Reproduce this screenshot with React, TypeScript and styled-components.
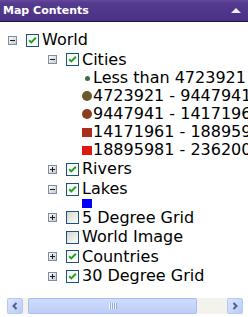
import * as React from 'react';
import styled, { createGlobalStyle } from 'styled-components';

type LegendItem = { label: string; shape: 'dot' | 'circle' | 'square'; color: string; size: number };
type TreeNode = {
    label: string;
    checked: boolean;
    expandable: boolean;
    expanded?: boolean;
    h: number;
    children?: TreeNode[];
    legend?: LegendItem[];
    legendH?: number;
};

const tree: TreeNode = {
    label: 'World', checked: true, expandable: true, expanded: true, h: 20,
    children: [
        {
            label: 'Cities', checked: true, expandable: true, expanded: true, h: 19, legendH: 18,
            legend: [
                { label: 'Less than 4723921', shape: 'dot', color: '#3b6c45', size: 5 },
                { label: '4723921 - 9447941', shape: 'circle', color: '#6a5a2c', size: 10 },
                { label: '9447941 - 14171961', shape: 'circle', color: '#8a3e1e', size: 10 },
                { label: '14171961 - 18895981', shape: 'square', color: '#a92f1d', size: 9 },
                { label: '18895981 - 23620001', shape: 'square', color: '#dc1a10', size: 9 },
            ],
        },
        { label: 'Rivers', checked: true, expandable: true, h: 20 },
        {
            label: 'Lakes', checked: true, expandable: true, expanded: true, h: 20, legendH: 9,
            legend: [{ label: '', shape: 'square', color: '#0000ff', size: 9 }],
        },
        { label: '5 Degree Grid', checked: false, expandable: true, h: 19 },
        { label: 'World Image', checked: false, expandable: false, h: 20 },
        { label: 'Countries', checked: true, expandable: true, h: 19 },
        { label: '30 Degree Grid', checked: true, expandable: true, h: 20 },
    ],
};

const GlobalStyle = createGlobalStyle`
  html, body { margin: 0; padding: 0; background: #fff; }
  body { font-family: "DejaVu Sans", Verdana, sans-serif; }
`;

const Panel = styled.div`
  width: 248px;
  height: 317px;
  display: flex;
  flex-direction: column;
  background: #fff;
  overflow: hidden;
`;

const Header = styled.div`
  height: 21px;
  flex: none;
  display: flex;
  align-items: center;
  justify-content: space-between;
  padding: 0 7px 0 3px;
  background: linear-gradient(#634a9c 0, #543b90 3px, #4a3185 100%);
  border-bottom: 1px solid #1f1340;
`;

const Title = styled.span`
  color: #fff;
  font-weight: bold;
  font-size: 11px;
`;

const CollapseArrow = styled.span`
  width: 0;
  height: 0;
  border-left: 5px solid transparent;
  border-right: 5px solid transparent;
  border-bottom: 5px solid #ececf4;
  margin-top: -1px;
`;

const Content = styled.div`
  flex: 1;
  overflow: hidden;
  padding: 8px 0 0 8px;
  color: #000;
  font-size: 16px;
  white-space: nowrap;
`;

const Row = styled.div<{ $h: number }>`
  display: flex;
  align-items: center;
  height: ${p => p.$h}px;
  line-height: ${p => p.$h}px;
`;

const ExpanderSlot = styled.span`
  width: 9px;
  height: 9px;
  flex: none;
  margin-right: 9px;
  display: block;
`;

const ExpanderBox = styled.svg`
  display: block;
`;

const CheckBox = styled.span<{ $checked: boolean }>`
  width: 13px;
  height: 13px;
  flex: none;
  box-sizing: border-box;
  margin-right: 3px;
  border: 1px solid #1c5180;
  background: ${p => (p.$checked
        ? 'linear-gradient(135deg, #f4f4f0, #fff)'
        : 'linear-gradient(135deg, #d6d5ce 0%, #ebeae4 50%, #fbfbf9 100%)')};
  display: block;
`;

const Label = styled.span`
  display: block;
`;

const Children = styled.div<{ $indent: number }>`
  padding-left: ${p => p.$indent}px;
`;

const SwatchSlot = styled.span`
  width: 10px;
  flex: none;
  display: flex;
  align-items: center;
  justify-content: center;
  margin-right: 1px;
`;

const Swatch = styled.span<{ $size: number; $color: string; $round: boolean }>`
  width: ${p => p.$size + (p.$round ? 0 : 1)}px;
  height: ${p => p.$size}px;
  background: ${p => p.$color};
  border-radius: ${p => (p.$round ? '50%' : '0')};
  display: block;
`;

const HScroll = styled.div`
  flex: none;
  height: 16px;
  margin: 0 5px 3px 7px;
  display: flex;
  background: #f3f2ec;
`;

const ScrollButton = styled.span`
  width: 16px;
  height: 16px;
  flex: none;
  box-sizing: border-box;
  border: 1px solid #b6c8f4;
  border-radius: 2px;
  background: linear-gradient(135deg, #dae5fe, #b9cbf8);
  display: flex;
  align-items: center;
  justify-content: center;
`;

const Track = styled.div`
  flex: 1;
  display: flex;
  align-items: stretch;
`;

const Thumb = styled.div<{ $offset: number; $width: number }>`
  margin-left: ${p => p.$offset}px;
  width: ${p => p.$width}px;
  box-sizing: border-box;
  border: 1px solid #a9bdf0;
  border-radius: 2px;
  background: linear-gradient(#cfdcfd, #bccdfa);
  display: flex;
  align-items: center;
  justify-content: center;
`;

const Grip = styled.span`
  width: 8px;
  height: 6px;
  background: repeating-linear-gradient(90deg, #eef3fe 0 1px, #93aae3 1px 2px);
  display: block;
`;

const Expander = ({ open }: { open: boolean }) => (
    <ExpanderBox width="9" height="9" viewBox="0 0 9 9">
        <defs>
            <linearGradient id="exg" x1="0" y1="0" x2="1" y2="1">
                <stop offset="0" stopColor="#ffffff" />
                <stop offset="1" stopColor="#c9c7bb" />
            </linearGradient>
        </defs>
        <rect x="0.5" y="0.5" width="8" height="8" fill="url(#exg)" stroke="#7a8fae" />
        <rect x="2" y="4" width="5" height="1" fill="#1b1b1b" />
        {!open && <rect x="4" y="2" width="1" height="5" fill="#1b1b1b" />}
    </ExpanderBox>
);

const Check = () => (
    <svg width="11" height="11" viewBox="0 0 11 11" style={{ display: 'block' }}>
        <polyline points="2.2,5.2 4.3,7.4 8.8,2.8" fill="none" stroke="#21a121" strokeWidth="2" />
    </svg>
);

const Legend = ({ items, h }: { items: LegendItem[]; h: number }) => (
    <Children $indent={34}>
        {items.map((it, i) => (
            <Row key={i} $h={h}>
                <SwatchSlot>
                    <Swatch $size={it.size} $color={it.color} $round={it.shape !== 'square'} />
                </SwatchSlot>
                {it.label && <Label>{it.label}</Label>}
            </Row>
        ))}
    </Children>
);

const Node = ({ node }: { node: TreeNode }) => (
    <>
        <Row $h={node.h}>
            <ExpanderSlot>{node.expandable && <Expander open={!!node.expanded} />}</ExpanderSlot>
            <CheckBox $checked={node.checked}>{node.checked && <Check />}</CheckBox>
            <Label>{node.label}</Label>
        </Row>
        {node.expanded && node.legend && <Legend items={node.legend} h={node.legendH || 18} />}
        {node.expanded && node.children && (
            <Children $indent={40}>
                {node.children.map(c => <Node key={c.label} node={c} />)}
            </Children>
        )}
    </>
);

const App = () => (
    <>
        <GlobalStyle />
        <Panel>
            <Header>
                <Title>Map Contents</Title>
                <CollapseArrow />
            </Header>
            <Content>
                <Node node={tree} />
            </Content>
            <HScroll>
                <ScrollButton>
                    <svg width="8" height="8" viewBox="0 0 8 8"><polyline points="5.5,1 2.5,4 5.5,7" fill="none" stroke="#4d6185" strokeWidth="2" /></svg>
                </ScrollButton>
                <Track>
                    <Thumb $offset={5} $width={169}>
                        <Grip />
                    </Thumb>
                </Track>
                <ScrollButton>
                    <svg width="8" height="8" viewBox="0 0 8 8"><polyline points="2.5,1 5.5,4 2.5,7" fill="none" stroke="#4d6185" strokeWidth="2" /></svg>
                </ScrollButton>
            </HScroll>
        </Panel>
    </>
);

export default App;
